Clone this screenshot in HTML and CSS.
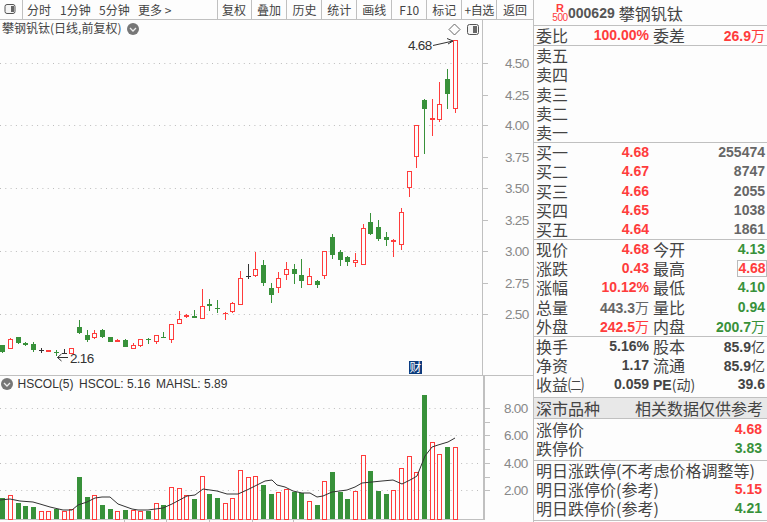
FILE: index.html
```html
<!DOCTYPE html>
<html>
<head>
    <meta charset="utf-8">
    <title>攀钢钒钛 000629</title>
    <link rel="stylesheet" href="styles.css">
</head>
<body>
    <div class="app">
        <div class="main">
            <!-- Toolbar -->
            <div class="toolbar">
                <div class="tool-icon">
                    <svg width="12" height="12" viewBox="0 0 12 12"><rect x="1" y="1.5" width="10" height="9" rx="2" class="toggle-box"/><rect x="7" y="3" width="3" height="6" class="toggle-fill"/></svg>
                </div>
                <div class="periods">
                    <span class="period-a">分时</span>
                    <span class="period-b">1分钟</span>
                    <span class="period-b">5分钟</span>
                    <span class="period-b">更多 &gt;</span>
                </div>
                <div class="tool w34">复权</div>
                <div class="tool w36">叠加</div>
                <div class="tool w35">历史</div>
                <div class="tool w35">统计</div>
                <div class="tool w35">画线</div>
                <div class="tool w35">F10</div>
                <div class="tool w35">标记</div>
                <div class="tool w35 tight">+自选</div>
                <div class="tool w36 last">返回</div>
            </div>
            <!-- Chart canvas, filled in by chart.js -->
            <svg id="chart" class="chart" width="533" height="502" viewBox="0 20 533 502"></svg>
        </div>

        <!-- Quote panel -->
        <div class="panel">
            <div class="head">
                <div class="mark"><b>R</b><span>500</span></div>
                <span class="code">000629</span>
                <span class="name">攀钢钒钛</span>
            </div>
            <div class="sect">
                <div class="row"><i>委比</i><b class="red">100.00%</b><i class="l2">委差</i><b class="red">26.9<u>万</u></b></div>
            </div>
            <div class="sect">
                <div class="row"><i>卖五</i></div>
                <div class="row"><i>卖四</i></div>
                <div class="row"><i>卖三</i></div>
                <div class="row"><i>卖二</i></div>
                <div class="row"><i>卖一</i></div>
            </div>
            <div class="sect">
                <div class="row"><i>买一</i><b class="red">4.68</b><i class="l2"></i><b class="gray">255474</b></div>
                <div class="row"><i>买二</i><b class="red">4.67</b><i class="l2"></i><b class="gray">8747</b></div>
                <div class="row"><i>买三</i><b class="red">4.66</b><i class="l2"></i><b class="gray">2055</b></div>
                <div class="row"><i>买四</i><b class="red">4.65</b><i class="l2"></i><b class="gray">1038</b></div>
                <div class="row"><i>买五</i><b class="red">4.64</b><i class="l2"></i><b class="gray">1861</b></div>
            </div>
            <div class="sect">
                <div class="row"><i>现价</i><b class="red">4.68</b><i class="l2">今开</i><b class="green">4.13</b></div>
                <div class="row"><i>涨跌</i><b class="red">0.43</b><i class="l2">最高</i><b class="red"><em class="boxed">4.68</em></b></div>
                <div class="row"><i>涨幅</i><b class="red">10.12%</b><i class="l2">最低</i><b class="green">4.10</b></div>
                <div class="row"><i>总量</i><b class="gray">443.3<u>万</u></b><i class="l2">量比</i><b class="green">0.94</b></div>
                <div class="row"><i>外盘</i><b class="red">242.5<u>万</u></b><i class="l2">内盘</i><b class="green">200.7<u>万</u></b></div>
            </div>
            <div class="sect extra">
                <div class="row"><i>换手</i><b class="dark">5.16%</b><i class="l2">股本</i><b class="dark">85.9<u>亿</u></b></div>
                <div class="row"><i>净资</i><b class="dark">1.17</b><i class="l2">流通</i><b class="dark">85.9<u>亿</u></b></div>
                <div class="row"><i>收益㈡</i><b class="dark">0.059</b><i class="l2 pe"><b class="dark">PE</b>(动)</i><b class="dark">39.6</b></div>
            </div>
            <div class="band"><span>深市品种</span><span>相关数据仅供参考</span></div>
            <div class="sect limit">
                <div class="line"><i>涨停价</i><b class="red">4.68</b></div>
                <div class="line"><i>跌停价</i><b class="green">3.83</b></div>
            </div>
            <div class="sect tomorrow">
                <div class="line"><i>明日涨跌停(不考虑价格调整等)</i></div>
                <div class="line"><i>明日涨停价(参考)</i><b class="red">5.15</b></div>
                <div class="line"><i>明日跌停价(参考)</i><b class="green">4.21</b></div>
            </div>
        </div>
    </div>
    <script src="chart.js"></script>
</body>
</html>
```
FILE: styles.css
```css
* {
    box-sizing: border-box;
}
body {
    margin: 0;
    background-color: #fdfdfd;
    color: #444;
    font-family: "Liberation Sans", "Noto Sans CJK SC", sans-serif;
    overflow: hidden;
}
.app {
    display: flex;
    width: 767px;
    height: 522px;
}
.main {
    width: 533px;
    flex: none;
}

/* Toolbar */
.toolbar {
    display: flex;
    height: 20px;
    border-bottom: 1px solid #c0c0c0;
    font-family: "Noto Sans CJK SC", sans-serif;
    font-size: 12px;
    line-height: 19px;
    color: #444;
}
.tool-icon {
    width: 23px;
    border-right: 1px solid #c0c0c0;
    padding: 3px 0 0 4px;
}
.tool-icon svg {
    display: block;
}
.toggle-box {
    fill: #f4f4f4;
    stroke: #555;
}
.toggle-fill {
    fill: #666;
}
.periods {
    width: 195px;
    border-right: 1px solid #c0c0c0;
    display: flex;
    padding-left: 4px;
}
.period-a {
    width: 33px;
}
.period-b {
    width: 39px;
    white-space: nowrap;
}
.tool {
    border-right: 1px solid #c0c0c0;
    text-align: center;
    white-space: nowrap;
}
.tool.tight {
    letter-spacing: -0.4px;
}
.tool.last {
    border-right: none;
}
.w34 { width: 34px; }
.w35 { width: 35px; }
.w36 { width: 36px; }

/* Chart */
.chart {
    display: block;
    font-family: "Liberation Sans", sans-serif;
}
.grid {
    stroke: #bdbdbd;
    stroke-dasharray: 1 4.3;
}
.axis-line {
    fill: #c0c0c0;
}
.axis-text {
    fill: #888;
    font-size: 13.5px;
    letter-spacing: -0.7px;
}
.note {
    fill: #333;
    font-size: 13.5px;
    letter-spacing: -0.7px;
}
.legend {
    fill: #333;
    font-size: 12px;
}
.title {
    fill: #444;
    font-family: "Noto Sans CJK SC", sans-serif;
    font-size: 12px;
}
.arrow {
    fill: none;
    stroke: #333;
}
.up {
    fill: #fdfdfd;
    stroke: #ff3c3c;
}
.up-solid, .up-wick {
    fill: #ff3c3c;
}
.down, .down-wick {
    fill: #38913a;
}
.flat, .flat-wick {
    fill: #333;
}
.ma {
    fill: none;
    stroke: #333;
}
.badge {
    fill: #0b3b7c;
}
.badge-text {
    fill: #fff;
    font-family: "Noto Sans CJK SC", sans-serif;
    font-size: 12px;
}
.chip {
    fill: #777;
}
.chip-mark {
    fill: none;
    stroke: #eee;
    stroke-width: 1.3;
}
.diamond {
    fill: none;
    stroke: #666;
}

/* Quote panel */
.panel {
    width: 234px;
    flex: none;
    border-left: 1px solid #c0c0c0;
    font-size: 14px;
}
.head {
    display: flex;
    align-items: center;
    height: 26px;
    border-bottom: 1px solid #c0c0c0;
    padding-left: 18px;
}
.mark {
    width: 16px;
    color: #ff3c3c;
    text-align: center;
    font-size: 11px;
    line-height: 10px;
}
.mark b, .mark span {
    display: block;
}
.mark span {
    font-size: 10px;
    letter-spacing: -0.4px;
}
.code {
    font-weight: bold;
    color: #555;
    margin-right: 4px;
}
.name {
    font-family: "Noto Sans CJK SC", sans-serif;
    font-size: 16px;
    line-height: 20px;
}
.sect {
    border-bottom: 1px solid #c0c0c0;
    padding: 0 2px;
}
.row {
    display: grid;
    grid-template-columns: 32px 81px 36px 1fr;
    height: 19.2px;
    line-height: 19.2px;
}
.line {
    display: flex;
    justify-content: space-between;
    height: 19.2px;
    line-height: 19.2px;
    padding-right: 3px;
}
.row i, .line i {
    font-style: normal;
    font-family: "Noto Sans CJK SC", sans-serif;
    font-size: 16px;
    white-space: nowrap;
    color: #444;
}
.l2 {
    padding-left: 4px;
}
.row b {
    text-align: right;
    white-space: nowrap;
}
.row i b {
    font-family: "Liberation Sans", sans-serif;
    font-size: 14px;
}
.row i.pe {
    font-size: 14px;
}
u {
    text-decoration: none;
    font-weight: normal;
    font-family: "Noto Sans CJK SC", sans-serif;
}
em.boxed {
    font-style: normal;
    display: inline-block;
    border: 1px solid #bbb;
    width: 30px;
    height: 17px;
    line-height: 15px;
    text-align: center;
    margin-right: -2px;
}
.red { color: #ff3c3c; }
.green { color: #38913a; }
.gray { color: #666; }
.dark { color: #444; }
.extra {
    height: 61px;
}
.band {
    display: flex;
    justify-content: space-between;
    height: 21px;
    line-height: 20px;
    padding: 0 4px 0 2px;
    background-color: #e8e8e8;
    border-bottom: 1px solid #c0c0c0;
    font-family: "Noto Sans CJK SC", sans-serif;
    font-size: 16px;
    white-space: nowrap;
}
.limit {
    height: 42px;
    padding-top: 1px;
}
.tomorrow {
    height: 60px;
}
```
FILE: chart.js
```js
const NS = 'http://www.w3.org/2000/svg';
const svg = document.getElementById('chart');

function add(tag, attrs, text) {
    const el = document.createElementNS(NS, tag);
    for (const k in attrs) el.setAttribute(k, attrs[k]);
    if (text) el.textContent = text;
    svg.appendChild(el);
    return el;
}

function box(x, y, w, h, cls) {
    add('rect', { x: x, y: y, width: w, height: h, class: cls, 'shape-rendering': 'crispEdges' });
}

// Grid and axis of the price pane
[63, 125, 188, 251, 314].forEach(y => {
    add('line', { x1: 0, x2: 480, y1: y + 0.5, y2: y + 0.5, class: 'grid' });
});
[[4.50, 63], [4.25, 95], [4.00, 125], [3.75, 157], [3.50, 188], [3.25, 220], [3.00, 251], [2.75, 283], [2.50, 314]].forEach(t => {
    box(483, t[1], 5, 1, 'axis-line');
    add('text', { x: 505, y: t[1] + 5, class: 'axis-text' }, t[0].toFixed(2));
});
box(482, 20, 1, 355, 'axis-line');
box(0, 375, 533, 1, 'axis-line');

// Grid and axis of the volume pane
[408, 435, 463, 490].forEach(y => {
    add('line', { x1: 0, x2: 480, y1: y + 0.5, y2: y + 0.5, class: 'grid' });
});
[408, 422, 435, 449, 463, 477, 490].forEach(y => box(485, y, 5, 1, 'axis-line'));
[[8, 408], [6, 435], [4, 463], [2, 490]].forEach(t => {
    add('text', { x: 504, y: t[1] + 5, class: 'axis-text' }, t[0].toFixed(2));
});
box(483, 376, 2, 144, 'axis-line');
box(0, 519, 483, 1, 'axis-line');
[124, 166, 209, 252, 293].forEach(x => box(x, 520, 1, 2, 'axis-line'));

// Candles: body top, body bottom, high, low, kind
const candles = [
    [345, 352, 345, 353, 'g'], [339, 349, 338, 349, 'r'], [337, 343, 337, 344, 'g'], [343, 345, 342, 346, 'g'],
    [344, 350, 342, 352, 'g'], [350, 351, 348, 353, 'k'], [350, 352, 350, 352, 'r'], [352, 353, 350, 356, 'g'],
    [353, 354, 349, 354, 'k'], [348, 354, 348, 354, 'r'], [327, 333, 320, 334, 'g'], [335, 340, 330, 342, 'g'],
    [333, 338, 330, 339, 'r'], [330, 337, 329, 338, 'g'], [337, 342, 337, 342, 'g'], [340, 342, 339, 342, 'r'],
    [340, 347, 339, 347, 'g'], [345, 349, 343, 349, 'r'], [339, 346, 339, 347, 'r'], [339, 340, 338, 344, 'g'],
    [335, 342, 335, 344, 'r'], [337, 338, 332, 338, 'g'], [324, 340, 324, 343, 'r'], [319, 324, 311, 324, 'r'],
    [315, 317, 314, 318, 'R'], [316, 318, 310, 318, 'g'], [306, 319, 289, 319, 'r'], [304, 306, 299, 311, 'g'],
    [308, 309, 300, 313, 'g'], [313, 314, 312, 320, 'R'], [303, 312, 302, 313, 'r'], [278, 305, 271, 305, 'r'],
    [276, 277, 264, 279, 'k'], [269, 276, 252, 277, 'r'], [265, 283, 260, 286, 'g'], [288, 295, 283, 303, 'g'],
    [278, 288, 272, 293, 'r'], [269, 275, 262, 280, 'r'], [269, 274, 264, 284, 'g'], [275, 281, 259, 288, 'g'],
    [276, 285, 268, 285, 'r'], [281, 285, 280, 288, 'g'], [251, 276, 251, 279, 'r'], [237, 255, 234, 259, 'g'],
    [252, 260, 250, 266, 'g'], [257, 262, 256, 266, 'g'], [260, 263, 253, 267, 'r'], [228, 265, 224, 265, 'r'],
    [222, 234, 213, 235, 'g'], [227, 239, 220, 241, 'g'], [237, 240, 232, 246, 'g'], [240, 242, 239, 257, 'r'],
    [212, 245, 208, 250, 'r'], [171, 188, 171, 197, 'r'], [125, 157, 125, 168, 'r'], [100, 109, 99, 154, 'g'],
    [118, 120, 99, 136, 'r'], [104, 120, 82, 122, 'r'], [79, 94, 69, 109, 'g'], [40, 109, 40, 113, 'r']
];

// Volume bar tops, with r for hollow red and g for solid green
const volumes = [
    [498, 'g'], [495, 'r'], [503, 'g'], [506, 'g'], [507, 'g'], [511, 'r'], [511, 'r'], [509, 'g'], [511, 'r'], [509, 'r'],
    [477, 'g'], [497, 'g'], [495, 'r'], [505, 'g'], [509, 'g'], [511, 'r'], [510, 'g'], [510, 'r'], [511, 'r'], [511, 'g'],
    [503, 'r'], [505, 'g'], [487, 'r'], [488, 'r'], [495, 'r'], [499, 'g'], [476, 'r'], [494, 'g'], [498, 'g'], [503, 'r'],
    [498, 'r'], [470, 'r'], [477, 'r'], [476, 'r'], [485, 'g'], [494, 'g'], [492, 'r'], [489, 'r'], [492, 'g'], [493, 'g'],
    [501, 'r'], [505, 'g'], [481, 'r'], [472, 'g'], [492, 'g'], [499, 'g'], [491, 'r'], [455, 'r'], [471, 'g'], [491, 'g'],
    [494, 'g'], [490, 'r'], [468, 'r'], [456, 'r'], [472, 'r'], [395, 'g'], [442, 'r'], [454, 'r'], [447, 'g'], [447, 'r']
];

const wickClass = { r: 'up-wick', R: 'up-wick', g: 'down-wick', k: 'flat-wick' };

candles.forEach((c, i) => {
    const left = Math.ceil(i * 23 / 3);
    const kind = c[4];
    box(left + 2, c[2], 1, c[3] - c[2], wickClass[kind]);
    if (kind === 'r') {
        box(left + 0.5, c[0] + 0.5, 4, c[1] - c[0] - 1 < 1 ? 1 : c[1] - c[0] - 1, 'up');
    } else if (kind === 'R') {
        box(left, c[0], 5, c[1] - c[0], 'up-solid');
    } else if (kind === 'g') {
        box(left, c[0], 5, c[1] - c[0], 'down');
    } else {
        box(left, c[0], 5, 1, 'flat');
    }
});

volumes.forEach((v, i) => {
    const left = Math.ceil(i * 23 / 3);
    if (v[1] === 'r') {
        box(left + 0.5, v[0] + 0.5, 4, 519 - v[0], 'up');
    } else {
        box(left, v[0], 5, 519 - v[0], 'down');
    }
});

// Moving average over the volume bars
const ma = [
    [0, 500], [10, 499], [20, 501], [33, 502], [40, 504], [50, 507], [63, 510], [72, 510], [78, 505], [87, 502],
    [95, 498], [102, 497], [110, 497], [118, 504], [132, 509], [138, 510], [148, 510], [163, 508], [172, 504], [187, 496],
    [195, 495], [203, 489], [217, 491], [227, 494], [238, 494], [247, 490], [257, 485], [265, 481], [272, 480], [277, 485],
    [285, 487], [293, 491], [302, 493], [310, 493], [317, 497], [323, 496], [332, 492], [347, 490], [355, 487], [362, 483],
    [372, 482], [382, 481], [393, 480], [402, 484], [412, 479], [417, 476], [425, 456], [432, 447], [438, 445], [448, 442], [455, 438]
];
add('polyline', { points: ma.map(p => p.join(',')).join(' '), class: 'ma' });

// Pane captions
add('text', { x: 2, y: 33, class: 'title' }, '攀钢钒钛(日线,前复权)');
add('circle', { cx: 133, cy: 29, r: 6, class: 'chip' });
add('path', { d: 'M130 28l3 3 3-3', class: 'chip-mark' });
add('circle', { cx: 7, cy: 384, r: 6, class: 'chip' });
add('path', { d: 'M4 383l3 3 3-3', class: 'chip-mark' });
add('text', { x: 17.5, y: 388, class: 'legend' }, 'HSCOL(5)');
add('text', { x: 79, y: 388, class: 'legend' }, 'HSCOL: 5.16');
add('text', { x: 156, y: 388, class: 'legend' }, 'MAHSL: 5.89');

// Price notes
add('text', { x: 408, y: 50, class: 'note' }, '4.68');
add('path', { d: 'M433 45.5L453 41M447 38.5l6 2.5-5 3', class: 'arrow' });
add('text', { x: 70, y: 363, class: 'note' }, '2.16');
add('path', { d: 'M68 357.5H57.5M61.5 354l-4 3.5 4 3.5', class: 'arrow' });

// Marker, pane toggle and the small badge
add('path', { d: 'M454.5 24l5.5 5.5-5.5 5.5-5.5-5.5z', class: 'diamond' });
add('rect', { x: 467.5, y: 24.5, width: 11, height: 10, rx: 2, class: 'toggle-box' });
box(473, 26, 4, 7, 'toggle-fill');
box(409, 361, 13, 13, 'badge');
add('text', { x: 409.5, y: 372, class: 'badge-text' }, '财');
```
